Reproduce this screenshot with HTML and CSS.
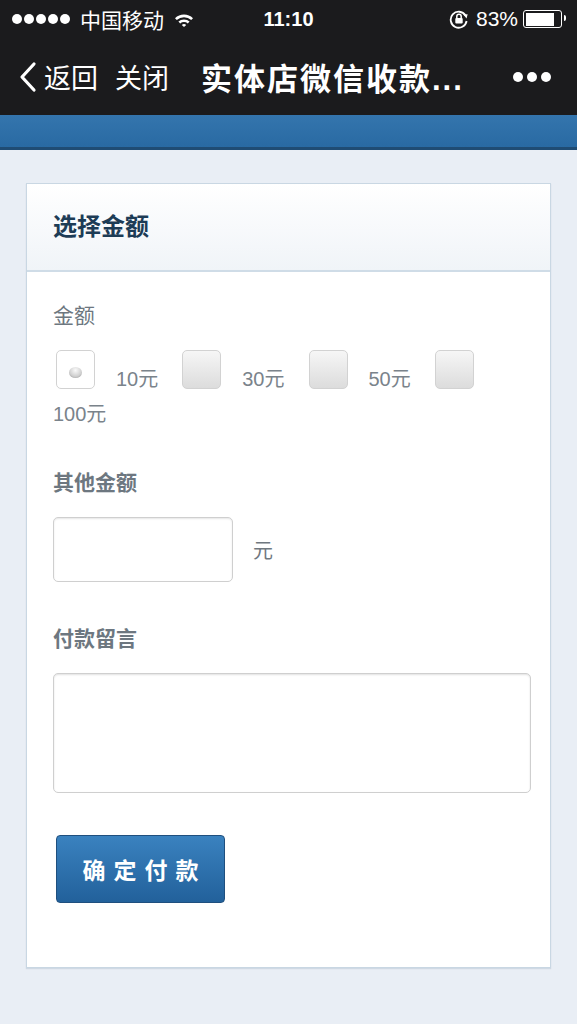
FILE: index.html
```html
<!DOCTYPE html>
<html lang="zh-CN">
<head>
	<meta charset="utf-8">
	<title>实体店微信收款</title>
	<link rel="stylesheet" href="styles.css">
</head>
<body>
<header class="topbar">
	<div class="status">
		<div class="status-left">
			<span class="signal"><i></i><i></i><i></i><i></i><i></i></span>
			<span class="carrier">中国移动</span>
			<svg class="wifi" width="20" height="14" viewBox="0 0 20 14">
				<path d="M1 5.2 A13 13 0 0 1 19 5.2 L17.2 7 A10.5 10.5 0 0 0 2.8 7 Z" fill="#fff"/>
				<path d="M4.4 8.6 A8.2 8.2 0 0 1 15.6 8.6 L13.8 10.4 A5.6 5.6 0 0 0 6.2 10.4 Z" fill="#fff"/>
				<path d="M7.8 12 A3.2 3.2 0 0 1 12.2 12 L10 14 Z" fill="#fff"/>
			</svg>
		</div>
		<div class="clock">11:10</div>
		<div class="status-right">
			<svg class="lock" width="20" height="20" viewBox="0 0 20 20">
				<path d="M16.5 6.5 A8 8 0 1 0 17.6 12" fill="none" stroke="#fff" stroke-width="1.8"/>
				<path d="M14.2 5.4 L18.6 5.2 L17.6 9.4 Z" fill="#fff"/>
				<rect x="6.3" y="9" width="7.4" height="5.6" rx="1" fill="#fff"/>
				<path d="M7.8 9 V7.4 A2.2 2.2 0 0 1 12.2 7.4 V9" fill="none" stroke="#fff" stroke-width="1.5"/>
			</svg>
			<span class="battery-pct">83%</span>
			<span class="battery"><span class="battery-fill"></span></span>
		</div>
	</div>
	<nav class="navbar">
		<a class="back" href="#">
			<svg width="20" height="32" viewBox="0 0 20 32">
				<path d="M16 3 L4 16 L16 29" fill="none" stroke="#fff" stroke-width="3.2" stroke-linecap="round" stroke-linejoin="round"/>
			</svg>
			返回
		</a>
		<a class="close" href="#">关闭</a>
		<h1 class="title">实体店微信收款...</h1>
		<span class="more"><i></i><i></i><i></i></span>
	</nav>
</header>
<div class="band"></div>

<main class="page">
	<form class="panel">
		<div class="panel-head">选择金额</div>
		<div class="panel-body">
			<div class="field">
				<div class="field-label">金额</div>
				<div class="amounts">
					<label class="amount"><span class="box checked"><span class="dot"></span></span><span class="amount-text">10元</span></label>
					<label class="amount"><span class="box"></span><span class="amount-text">30元</span></label>
					<label class="amount"><span class="box"></span><span class="amount-text">50元</span></label>
					<label class="amount"><span class="box"></span></label>
				</div>
				<div class="amount-wrap">100元</div>
			</div>

			<div class="field">
				<div class="field-label bold">其他金额</div>
				<div class="other">
					<input type="text" class="money">
					<span class="unit">元</span>
				</div>
			</div>

			<div class="field">
				<div class="field-label bold">付款留言</div>
				<textarea class="note"></textarea>
			</div>

			<button type="button" class="pay">确定付款</button>
		</div>
	</form>
</main>
</body>
</html>
```

FILE: styles.css
```css
body{
	margin: 0;
	background: #e9eef5;
	font-family: "Liberation Sans", "Noto Sans CJK SC", sans-serif;
	color: #6f7880;
}
.topbar{
	background: #1b1b1d;
	color: #fff;
}
.status{
	height: 38px;
	display: flex;
	align-items: center;
	justify-content: space-between;
	padding: 0 11px 0 12px;
	font-size: 21px;
	position: relative;
}
.status-left, .status-right{
	display: flex;
	align-items: center;
}
.signal{
	display: flex;
	gap: 2px;
	margin-right: 10px;
}
.signal i{
	width: 10px;
	height: 10px;
	border-radius: 50%;
	background: #fff;
}
.wifi{
	margin-left: 10px;
	margin-top: 2px;
}
.clock{
	position: absolute;
	left: 0;
	right: 0;
	text-align: center;
	font-size: 20px;
	font-weight: bold;
	pointer-events: none;
}
.lock{
	margin-right: 7px;
}
.battery-pct{
	font-size: 21px;
	margin-right: 5px;
}
.battery{
	width: 39px;
	height: 18px;
	border: 1.5px solid #fff;
	border-radius: 3px;
	padding: 1.5px;
	position: relative;
	box-sizing: border-box;
	margin-right: 4px;
}
.battery::after{
	content: "";
	position: absolute;
	right: -5px;
	top: 4px;
	width: 2px;
	height: 6px;
	background: #fff;
	border-radius: 0 2px 2px 0;
}
.battery-fill{
	display: block;
	width: 83%;
	height: 100%;
	background: #fff;
}
.navbar{
	height: 77px;
	display: flex;
	align-items: center;
	padding: 0 26px 0 18px;
}
.navbar a{
	color: #fff;
	text-decoration: none;
	font-size: 27px;
}
.back{
	display: flex;
	align-items: center;
	gap: 6px;
}
.close{
	margin-left: 17px;
}
.title{
	margin: 0 0 0 32px;
	font-size: 31px;
	font-weight: bold;
	flex: 1;
	letter-spacing: 2px;
	white-space: nowrap;
}
.more{
	display: flex;
	gap: 4px;
}
.more i{
	width: 10px;
	height: 10px;
	border-radius: 50%;
	background: #fff;
}
.band{
	height: 32px;
	background: linear-gradient(#3475ad, #296aa3);
	border-bottom: 3px solid #1f4c74;
}
.page{
	padding: 33px 26px 56px;
}
.panel{
	background: #fff;
	border: 1px solid #c9d7e3;
	box-shadow: 0 1px 1px rgba(150, 170, 190, .3);
}
.panel-head{
	height: 86px;
	line-height: 86px;
	padding: 0 26px;
	background: linear-gradient(#fff, #f0f4f8);
	border-bottom: 2px solid #cfdce7;
	font-size: 24px;
	font-weight: bold;
	color: #1d3c56;
}
.panel-body{
	padding: 31px 20px 64px 26px;
}
.field{
	margin-bottom: 44px;
}
.field-label{
	font-size: 21px;
	line-height: 26px;
	margin-bottom: 21px;
	color: #6d7780;
}
.field-label.bold{
	font-weight: bold;
}
.amounts{
	display: flex;
	align-items: flex-end;
	padding-left: 3px;
}
.amount{
	display: flex;
	align-items: flex-end;
}
.box{
	width: 39px;
	height: 39px;
	box-sizing: border-box;
	border: 1.5px solid #d2d2d2;
	border-radius: 5px;
	background: linear-gradient(#f6f6f6, #dcdcdc);
	display: flex;
	align-items: center;
	justify-content: center;
}
.box.checked{
	background: #fff;
}
.dot{
	width: 13px;
	height: 11px;
	border-radius: 50%;
	background: radial-gradient(circle at 50% 30%, #fafafa, #d0d0d0 60%, #8d8d8d);
	margin-top: 6px;
}
.amount-text{
	font-size: 20px;
	margin: 0 24px 0 21px;
	line-height: 20px;
	color: #7a838b;
}
.amount-wrap{
	font-size: 20px;
	line-height: 24px;
	margin-top: 13px;
	color: #7a838b;
}
.other{
	display: flex;
	align-items: center;
}
.money{
	width: 180px;
	height: 65px;
	box-sizing: border-box;
	border: 1.5px solid #cfcfcf;
	border-radius: 5px;
	box-shadow: inset 0 1px 2px rgba(0, 0, 0, .1);
}
.unit{
	font-size: 20px;
	margin-left: 20px;
}
.note{
	display: block;
	width: 478px;
	height: 120px;
	box-sizing: border-box;
	border: 1.5px solid #cfcfcf;
	border-radius: 5px;
	box-shadow: inset 0 1px 2px rgba(0, 0, 0, .12);
	resize: none;
}
.pay{
	margin: -2px 0 0 3px;
	width: 169px;
	height: 68px;
	border: 1.5px solid #1f4f7e;
	border-radius: 4px;
	background: linear-gradient(#3a82bf, #22619b);
	color: #fff;
	font: bold 23px "Liberation Sans", "Noto Sans CJK SC", sans-serif;
	letter-spacing: 8px;
	text-indent: 8px;
}
```
